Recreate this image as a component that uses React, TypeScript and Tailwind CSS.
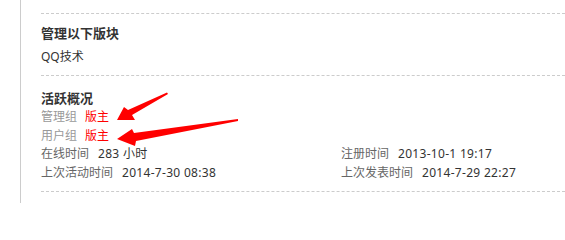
import React from "react";

const font = { fontFamily: '"Noto Sans", "Noto Sans CJK SC", sans-serif' };

function Field({ label, value, muted = false, red = false }: { label: string; value: string; muted?: boolean; red?: boolean }) {
  return (
    <li className="leading-[18.5px] whitespace-nowrap">
      <em className={"not-italic " + (muted ? "mr-[8px] text-[#999]" : "mr-[9px] text-[#666]")}>{label}</em>
      <span className={red ? "text-[#f00]" : "text-[#333] tracking-[0.3px]"}>{value}</span>
    </li>
  );
}

function Arrows() {
  return (
    <svg className="absolute left-0 top-0 pointer-events-none" width="565" height="203" viewBox="0 0 565 203">
      <polygon fill="#f00" points="117,120 124,107 128,110 167,92.5 168,94 132,115 135,120" />
      <polygon fill="#f00" points="117,139 132,129 134,133 238,119 238,121 136,141 135,146" />
    </svg>
  );
}

export default function App() {
  return (
    <div className="relative w-[565px] h-[203px] bg-white overflow-hidden text-[12px] text-[#333]" style={font}>
      <div className="ml-[20px] h-full border-l border-[#ccc] pl-[20px] pt-[13px]">
        {/* managed forums */}
        <div className="border-t border-dashed border-[#ccc] pt-[9px] pb-[9px]">
          <h2 className="text-[13px] font-bold leading-[20px] text-[#333]">管理以下版块</h2>
          <p className="mt-[5px] leading-[18px]">QQ技术</p>
        </div>

        {/* activity */}
        <div className="border-t border-dashed border-[#ccc] pt-[12px] pb-[9px]">
          <h2 className="text-[13px] font-bold leading-[20px] text-[#333]">活跃概况</h2>
          <ul>
            <Field label="管理组" value="版主" muted red />
            <Field label="用户组" value="版主" muted red />
          </ul>
          <ul className="grid grid-cols-[300px_1fr]">
            <Field label="在线时间" value="283 小时" />
            <Field label="注册时间" value="2013-10-1 19:17" />
            <Field label="上次活动时间" value="2014-7-30 08:38" />
            <Field label="上次发表时间" value="2014-7-29 22:27" />
          </ul>
        </div>
        <div className="border-t border-dashed border-[#ccc]" />
      </div>
      <Arrows />
    </div>
  );
}
